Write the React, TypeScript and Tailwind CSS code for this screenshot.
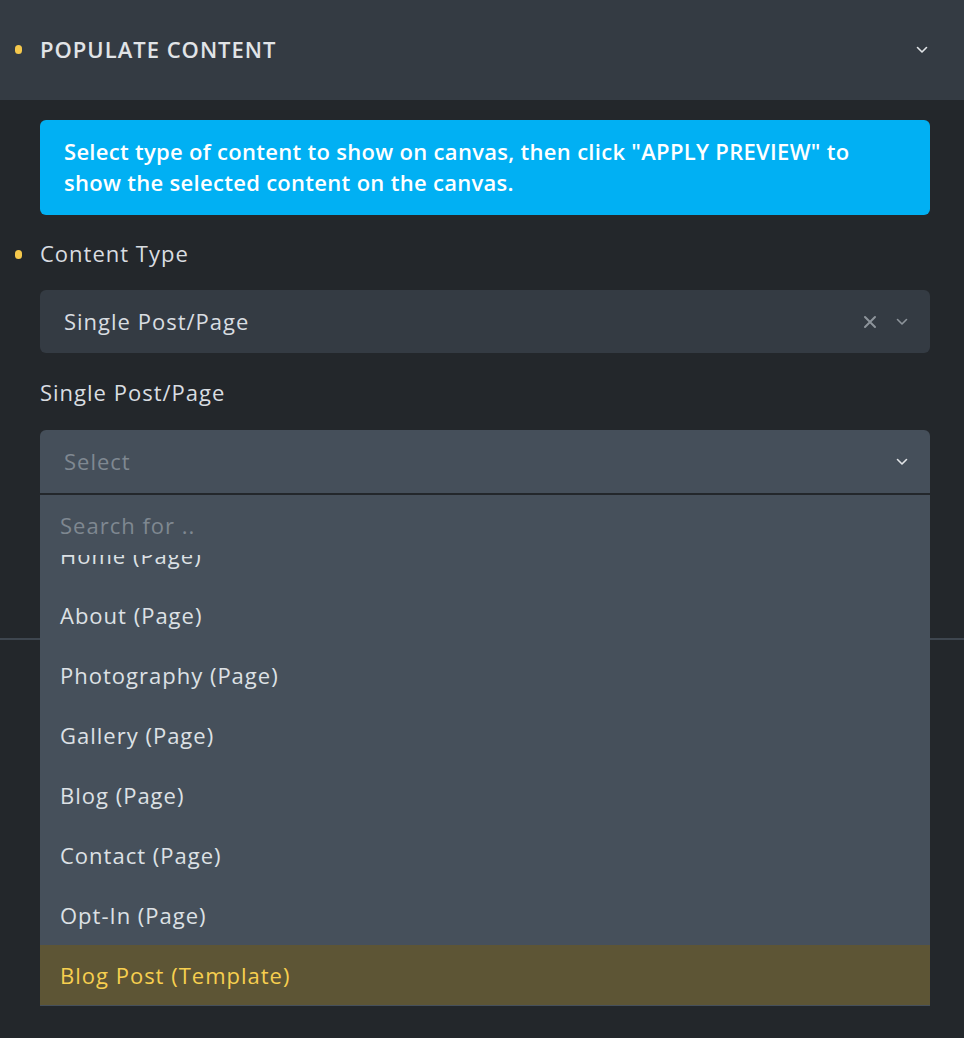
import React from 'react'

const items = [
    'Home (Page)',
    'About (Page)',
    'Photography (Page)',
    'Gallery (Page)',
    'Blog (Page)',
    'Contact (Page)',
    'Opt-In (Page)',
    'Blog Post (Template)',
]

function Chevron({ className }: { className?: string }) {
    return (
        <svg viewBox="0 0 12 8" className={className} fill="none" stroke="currentColor" strokeWidth="1.6" strokeLinecap="round" strokeLinejoin="round">
            <path d="M1.5 1.5 6 6l4.5-4.5" />
        </svg>
    )
}

function App() {
    return (
        <div className="min-h-screen w-[964px] h-[1038px] bg-[#23272b] overflow-hidden relative" style={{ fontFamily: '"Open Sans", "Noto Sans", sans-serif' }}>
            <div className="h-[100px] bg-[#343b43] flex items-center pl-[40px] pr-[36px] relative">
                <span className="absolute left-[15px] top-[45px] w-[7px] h-[9px] rounded-full bg-[#f5c84c]" />
                <h2 className="text-[22px] font-semibold tracking-[1px] text-[#e1e4e7] flex-1 -mt-[1px]">POPULATE CONTENT</h2>
                <Chevron className="w-[12px] h-[8px] text-[#e1e4e7]" />
            </div>

            <div className="pl-[40px] pr-[34px] pt-[20px]">
                <div className="bg-[#01b0f3] rounded-[6px] pl-[24px] pr-[40px] pt-[16px] pb-[17px] text-white font-semibold text-[22px] leading-[31px] tracking-[0.3px]">
                    Select type of content to show on canvas, then click "APPLY PREVIEW" to show the selected content on the canvas.
                </div>

                <div className="relative mt-[22px] text-[22px] tracking-[1px] text-[#d9dde1] leading-[32px]">
                    <span className="absolute -left-[25px] top-[13px] w-[7px] h-[9px] rounded-full bg-[#f5c84c]" />
                    Content Type
                </div>

                <div className="mt-[21px] h-[63px] bg-[#343b43] rounded-[6px] flex items-center pl-[24px] pr-[22px]">
                    <span className="flex-1 text-[22px] tracking-[1px] text-[#d9dde1] -mt-[1px]">Single Post/Page</span>
                    <svg viewBox="0 0 14 14" className="w-[14px] h-[14px] text-[#8d949b] mr-[19px]" stroke="currentColor" strokeWidth="2" strokeLinecap="round">
                        <path d="M2 2l10 10M12 2 2 12" />
                    </svg>
                    <Chevron className="w-[12px] h-[8px] text-[#8d949b]" />
                </div>

                <div className="mt-[23px] text-[22px] tracking-[1px] text-[#d9dde1] leading-[32px]">Single Post/Page</div>

                <div className="relative mt-[22px]">
                    <div className="h-[65px] bg-[#454f5a] rounded-t-[6px] flex items-center pl-[24px] pr-[22px] border-b-2 border-[#23272b]">
                        <span className="flex-1 text-[22px] tracking-[1px] text-[#7f8891]">Select</span>
                        <Chevron className="w-[12px] h-[8px] text-[#e1e4e7]" />
                    </div>

                    <div className="absolute left-0 right-0 top-[65px] z-10 bg-[#46505b]">
                        <div className="h-[60px] flex items-center pl-[20px] text-[22px] tracking-[1px] text-[#7f8891]">Search for ..</div>
                        <div className="h-[451px] overflow-hidden">
                            <div className="-mt-[30px]">
                                {items.map((item, i) => (
                                    <div
                                        key={item}
                                        className={`h-[60px] flex items-center pl-[20px] text-[22px] tracking-[1px] ${i === items.length - 1 ? 'bg-[#5d5535] text-[#f7cf4f]' : 'text-[#dde1e5]'}`}
                                    >
                                        {item}
                                    </div>
                                ))}
                            </div>
                        </div>
                    </div>
                </div>
            </div>

            <div className="mt-[143px] border-t-2 border-[#3e464f]" />
        </div>
    )
}

export default App
